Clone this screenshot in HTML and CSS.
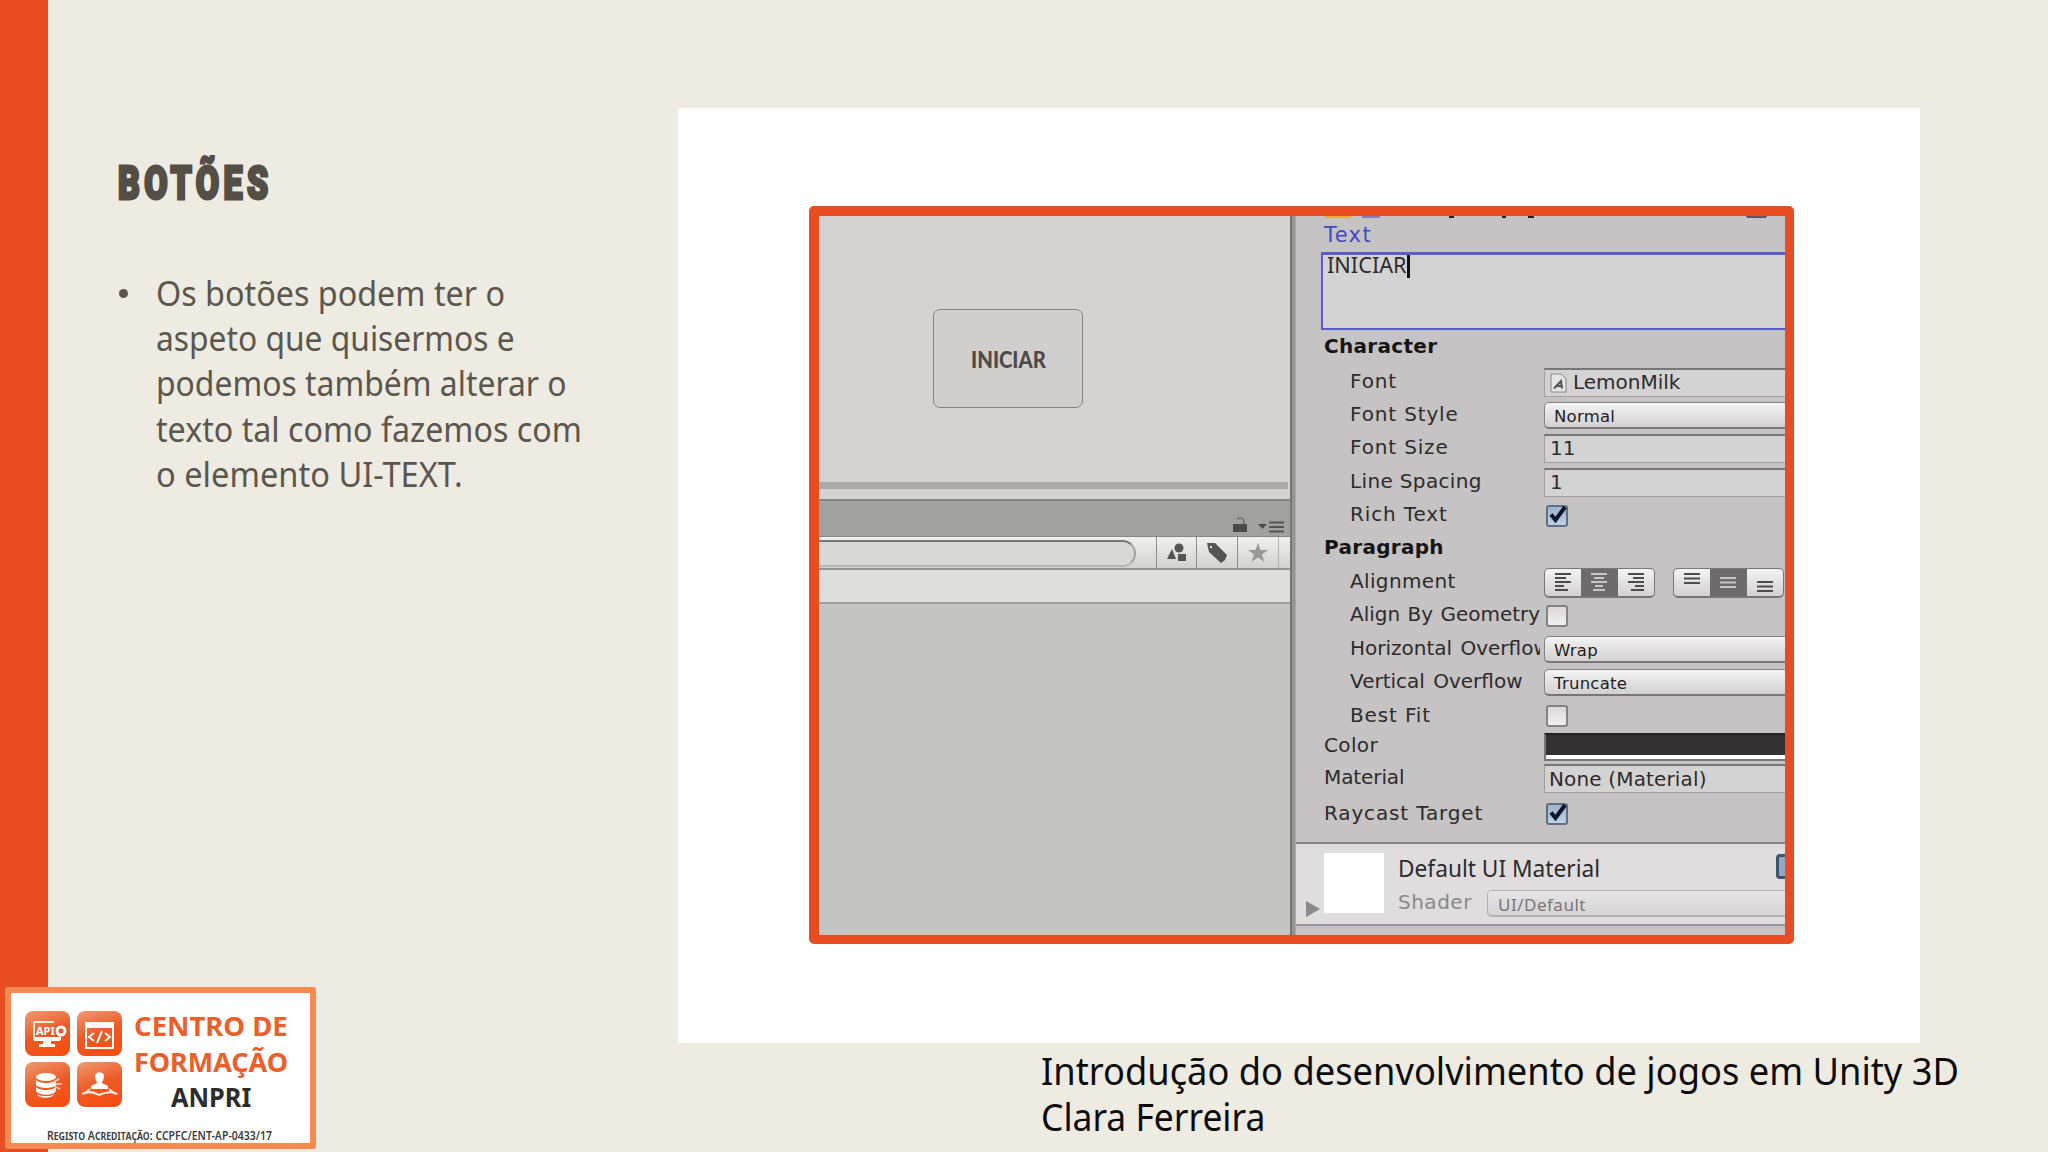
FILE: index.html
```html
<!DOCTYPE html>
<html lang="pt">
<head>
<meta charset="utf-8">
<title>Botões</title>
<link rel="stylesheet" href="styles.css">
</head>
<body>
<main class="slide">
  <div class="rail"></div>
  <section class="copy">
    <h1>BOTÕES</h1>
    <ul>
      <li><span class="l1">Os botões podem ter o</span><br><span class="l2">aspeto que quisermos e</span><br><span class="l3">podemos também alterar o</span><br><span class="l4">texto tal como fazemos com</span><br><span class="l5">o elemento UI-TEXT.</span></li>
    </ul>
  </section>
  <section class="stage">
    <div class="panel">
      <div class="shot">
        <div class="left">
          <div class="scene"><div class="game-button"><span>INICIAR</span></div></div>
          <div class="scroll"></div>
          <div class="tabbar">
            <svg width="16" height="18" viewBox="0 0 16 18"><path d="M1 8h14v8H1z" fill="#4b4b49"/><path d="M5 3.500C7 1 12 1 12 8" fill="none" stroke="#777775" stroke-width="2"/></svg>
            <svg width="28" height="14" viewBox="0 0 28 14"><path d="M1 4h9l-4.500 5z" fill="#4b4b49"/><path d="M12 2.500h15M12 7h15M12 11.500h15" stroke="#555553" stroke-width="2"/></svg>
          </div>
          <div class="toolbar">
            <div class="search"></div>
            <div class="tool first"><svg width="24" height="22" viewBox="0 0 24 22"><path d="M2 17 7 7l4 10z"/><circle cx="14" cy="6" r="4.500"/><path d="M13 12h8v7h-8z"/></svg></div>
            <div class="tool"><svg width="24" height="22" viewBox="0 0 24 22"><path fill-rule="evenodd" d="M2 1h8l12 12-2 5-4 3L4 10zM5 4v2h2V4z"/></svg></div>
            <div class="tool star"><svg width="24" height="22" viewBox="0 0 24 22"><path d="m12 1 2.500 7H22l-6 4.500 2.500 7.500L12 15.500 5.500 20 8 12.500 2 8h7.500z"/></svg></div>
            <div class="tool last"></div>
          </div>
          <div class="crumb"></div>
          <div class="assets"></div>
        </div>
        <div class="divider"></div>
        <div class="inspector">
          <div class="cutoff"><i class="c1"></i><i class="c2"></i><i class="c3"></i><i class="c4"></i><i class="c5"></i><i class="c6"></i></div>
          <div class="caption">Text</div>
          <div class="textarea"><span>INICIAR</span><i></i></div>
          <div class="row head first"><b>Character</b></div>
          <div class="row in"><label class="wide">Font</label><div class="field"><svg width="17" height="20" viewBox="0 0 17 20"><path d="M1 1h10l5 5v13H1z" fill="#e6e6e6" stroke="#888"/><path d="M4 15.500 11 8l1 7.500M7 13h5" fill="none" stroke="#555" stroke-width="2"/></svg><span class="lemon">LemonMilk</span></div></div>
          <div class="row in"><label class="wide">Font Style</label><div class="drop"><span>Normal</span></div></div>
          <div class="row in"><label class="wide">Font Size</label><div class="field num"><span>11</span></div></div>
          <div class="row in"><label class="mid">Line Spacing</label><div class="field num"><span>1</span></div></div>
          <div class="row in"><label class="wide">Rich Text</label><div class="check on"><svg viewBox="0 0 24 24"><path d="M6 11.500 10.500 17 20 4" /></svg></div></div>
          <div class="row head"><b class="para">Paragraph</b></div>
          <div class="row in"><label class="mid">Alignment</label>
            <div class="group">
              <div><svg viewBox="0 0 18 20"><path d="M1 2h16M1 6h11M1 10h16M1 14h9M1 18h13"/></svg></div>
              <div class="sel"><svg viewBox="0 0 18 20"><path d="M1 2h16M4 6h10M1 10h16M5 14h8M3 18h12"/></svg></div>
              <div><svg viewBox="0 0 18 20"><path d="M1 2h16M6 6h11M1 10h16M8 14h9M4 18h13"/></svg></div>
            </div>
            <div class="group second">
              <div><svg viewBox="0 0 18 20"><path d="M1 2h16M1 6.500h16M1 11h16"/></svg></div>
              <div class="sel"><svg viewBox="0 0 18 20"><path d="M1 6h16M1 10.500h16M1 15h16"/></svg></div>
              <div><svg viewBox="0 0 18 20"><path d="M1 10h16M1 14.500h16M1 19h16"/></svg></div>
            </div>
          </div>
          <div class="row in"><label class="open">Align By Geometry</label><div class="check"></div></div>
          <div class="row in"><label class="clipped">Horizontal Overflow</label><div class="drop"><span>Wrap</span></div></div>
          <div class="row in"><label class="clipped">Vertical Overflow</label><div class="drop"><span>Truncate</span></div></div>
          <div class="row in"><label class="wide">Best Fit</label><div class="check"></div></div>
          <div class="row color"><label class="mid">Color</label><div class="swatch"></div></div>
          <div class="row mat"><label class="tight">Material</label><div class="field none"><span>None (Material)</span></div></div>
          <div class="row ray"><label class="wide">Raycast Target</label><div class="check on"><svg viewBox="0 0 24 24"><path d="M6 11.500 10.500 17 20 4" /></svg></div></div>
          <div class="material">
            <svg class="tri" width="14" height="16" viewBox="0 0 14 16"><path d="M0 0 14 8 0 16z" fill="#8b898a"/></svg>
            <div class="preview"></div>
            <div class="info">
              <div class="name"><span>Default UI Material</span><i class="book"></i></div>
              <div class="shader"><span>Shader</span><div class="drop"><span>UI/Default</span></div></div>
            </div>
          </div>
        </div>
      </div>
    </div>
    <footer><span class="f1">Introdução do desenvolvimento de jogos em Unity 3D</span><br><span class="f2">Clara Ferreira</span></footer>
  </section>
  <aside class="logo">
    <div class="brand">
      <div class="tiles">
        <svg viewBox="0 0 45 45"><path d="M9 11h20M9 11v17h26v-4" fill="none" stroke="#ffe9df" stroke-width="2"/><path d="M9 26h26v4H9zM18 30h8v5h-8zM14 33h16v3H14z" fill="#fff"/><text x="11" y="24">API</text><circle cx="36" cy="20" r="4" fill="none" stroke="#fff" stroke-width="3"/></svg>
        <svg viewBox="0 0 45 45"><path d="M9 12h27v25H9z" fill="none" stroke="#fff" stroke-width="2"/><path d="M9 12h27v5H9z" fill="#fff"/><path d="m17 22-5 4 5 4M28 22l5 4-5 4M25 20l-5 12" fill="none" stroke="#fff" stroke-width="2"/></svg>
        <svg viewBox="0 0 45 45"><g fill="#fff"><ellipse cx="21" cy="15" rx="10" ry="4"/><path d="M11 18c3 4 17 4 20 0v5c-3 4-17 4-20 0zM11 25c3 4 17 4 20 0v4c-3 5-17 5-20 0zM12 32c4 3 14 3 17 0-1 5-16 5-17 0z"/></g><path d="m29 20 5-3M31 22h6M29 24l6 3" stroke="#ffd1bd" stroke-width="1.500"/></svg>
        <svg viewBox="0 0 45 45"><path d="M18 14c0-5 9-5 9 0 0 4-2 5-2 7l6 3v3H14v-3l6-3c0-2-2-3-2-7z" fill="#fff"/><path d="M5 32c6-3 12-2 17 1 6-3 12-4 18-1M9 30l4-3M36 30l-4-3" fill="none" stroke="#ffe9df" stroke-width="2"/></svg>
      </div>
      <div class="words"><span class="w1">CENTRO DE</span><span class="w2">FORMAÇÃO</span><span class="w3">ANPRI</span></div>
    </div>
    <div class="reg"><span>Registo Acreditação: CCPFC/ENT-AP-0433/17</span></div>
  </aside>
</main>
</body>
</html>
```
FILE: styles.css
```css
* { box-sizing: border-box; }
body { margin: 0; }
.slide {
  position: relative;
  display: flex;
  width: 2048px;
  height: 1152px;
  overflow: hidden;
  background: #eeebe3;
  font-family: "Noto Sans", "Open Sans", sans-serif;
}
.rail { width: 48px; background: #e84c22; }
span, label, b { white-space: nowrap; }
.slide span { display: inline-block; transform-origin: 0 50%; }

/* text column */
.copy { width: 630px; padding: 153px 0 0 70px; color: #5b564e; }
h1 {
  margin: 0;
  width: max-content;
  font: 900 46px/60px Roboto, sans-serif;
  letter-spacing: 6px;
  color: #544f46;
  -webkit-text-stroke: 3px #544f46;
  transform: scaleX(.735);
  transform-origin: 0 50%;
}
ul { list-style: none; margin: 58px 0 0; padding: 0; }
li { position: relative; padding-left: 38px; font-size: 34px; line-height: 45.200px; }
li::before { content: ""; position: absolute; left: 1px; top: 18px; width: 9px; height: 9px; border-radius: 50%; background: #5b564e; }
.slide .l1 { transform: scaleX(.95); }
.slide .l2 { transform: scaleX(.934); }
.slide .l3 { transform: scaleX(.937); }
.slide .l4 { transform: scaleX(.947); }
.slide .l5 { transform: scaleX(.959); }

/* picture and footer */
.stage { width: 1242px; padding-top: 108px; }
.panel { height: 935px; padding: 98px 0 0 131px; background: #fefefe; }
.shot {
  display: flex;
  width: 985px;
  height: 738px;
  border: 10px solid #e84c22;
  border-right-width: 9px;
  border-bottom-width: 9px;
  border-radius: 5px;
  background: #c4c4c2;
  overflow: hidden;
}
footer { padding: 5px 0 0 363px; font-size: 37.500px; line-height: 46px; color: #0c0b0a; white-space: nowrap; }
.slide .f1 { transform: scaleX(.967); }
.slide .f2 { transform: scaleX(.945); }

.left { width: 471px; display: flex; flex-direction: column; background: #d4d3d1; }
.scene { height: 266px; padding: 93px 0 0 114px; }
.game-button {
  display: flex; align-items: center; justify-content: center;
  width: 150px; height: 99px; padding-top: 1px;
  border: 1.500px solid #858583; border-radius: 7px; background: #d1cfcd;
  font: 900 23px/30px Lato, sans-serif; color: #4c4b49;
}
.slide .game-button span { transform: scaleX(.88); transform-origin: 50% 50%; }
.scroll { height: 17px; margin-right: 2px; border-top: 7px solid #a9a9a7; }
.tabbar { display: flex; justify-content: flex-end; align-items: flex-end; gap: 9px; height: 38px; padding: 0 5px 2px 0; background: #a1a19f; border-top: 2px solid #858583; border-bottom: 1px solid #888; }
.toolbar { display: flex; height: 33px; background: linear-gradient(#f0f0ee, #d2d2d0); border-bottom: 2px solid #949492; }
.search { width: 317px; height: 27px; margin: 3px 20px 0 0; border: 2px solid #777775; border-left: 0; border-bottom-color: #b5b5b3; border-right-color: #a0a09e; border-radius: 0 14px 14px 0; background: #d8d8d6; }
.tool { width: 41px; border-left: 1.500px solid #8d8d8b; display: flex; align-items: center; justify-content: center; fill: #555553; }
.tool.first { width: 40px; }
.tool.star { fill: #9a9a98; }
.tool.last { width: 12px; border-color: #b4b4b2; }
.crumb { height: 34px; background: #dededc; border-bottom: 2px solid #a0a09e; }
.assets { flex: 1; background: #c4c4c2; }
.divider { width: 6px; background: #959595; border-left: 2px solid #777; border-right: 1px solid #aaa; }

/* inspector */
.inspector { width: 489px; background: #c5c3c3; font: 20px/24px "DejaVu Sans", sans-serif; color: #2d2b2b; overflow: hidden; }
.cutoff { display: flex; height: 3px; padding-left: 29px; }
.cutoff i { height: 2px; }
.c1 { width: 26px; background: #e8aa3c; margin-right: 11px; }
.c2 { width: 18px; background: #8182b8; margin-right: 69px; }
.c3 { width: 5px; background: #222; margin-right: 48px; }
.c4 { width: 4px; background: #222; margin-right: 22px; }
.c5 { width: 6px; background: #222; margin-right: 212px; }
.c6 { width: 21px; background: #555865; border-radius: 0 0 8px 8px; }
.caption { height: 33px; padding-left: 28px; line-height: 32px; font-size: 21px; color: #4149c8; letter-spacing: 1.400px; }
.textarea { display: flex; width: 480px; height: 78px; margin-left: 25px; padding: 0 0 0 4px; border: 2px solid #5a5cc8; border-top-width: 3px; background: #d4d3d3; font: 21.700px/20px "Noto Sans", sans-serif; }
.textarea i { width: 3px; height: 23px; background: #111; }
.row { display: flex; align-items: center; height: 33.400px; padding-left: 28px; }
.row label { flex: none; width: 220px; overflow: hidden; margin-top: -3px; }
.row.in { padding-left: 54px; }
.row.in label { width: 190px; margin-right: 4px; }
.row label.wide { letter-spacing: .850px; }
.row label.mid { letter-spacing: .350px; }
.row label.tight { letter-spacing: -.100px; }
.row label.open { overflow: visible; word-spacing: 1px; }
.row label.clipped { word-spacing: 2px; }
.row b { color: #161515; margin-top: -4px; font-size: 20px; letter-spacing: .300px; }
.row.first { height: 35.500px; }
.field { display: flex; align-items: center; flex: none; width: 250px; height: 29px; border: 1.500px solid #a2a0a0; border-top: 2px solid #777; background: #d4d3d3; padding-left: 5px; }
.field span { margin-top: -1px; }
.none { padding-left: 4px; letter-spacing: .150px; }
.field svg { margin-right: 6px; }
.num { padding-left: 5px; }
.num span { margin-top: -2px; }
.drop { display: flex; align-items: center; flex: none; width: 260px; height: 27px; border: 1.500px solid #858383; border-bottom: 2px solid #777; border-radius: 5px; background: linear-gradient(#f4f4f4, #d2d0d0); padding: 4px 0 0 9px; font-size: 16.500px; line-height: 20px; letter-spacing: .250px; color: #1e1d1d; }
.check { width: 22px; height: 22px; margin-left: 2px; border: 2px solid #858383; border-radius: 3px; background: linear-gradient(#dcdada, #f0eeee); }
.check.on { background: linear-gradient(#9db3cd, #bdd2e6); border-color: #626d80; }
.check svg { display: block; width: 24px; height: 24px; margin: -4px -3px; overflow: visible; fill: none; stroke: #0e1528; stroke-width: 4; }
.group { display: flex; flex: none; width: 111px; height: 30px; border: 1.500px solid #777; border-bottom-width: 2px; border-radius: 5px; overflow: hidden; background: linear-gradient(#f4f4f4, #d2d0d0); }
.group.second { margin-left: 18px; }
.group div { flex: 1; display: flex; align-items: center; justify-content: center; }
.group svg { width: 18px; height: 20px; stroke: #4d4b4b; stroke-width: 2.200; }
.group .sel { background: #6d6b6b; }
.group .sel svg { stroke: #c8c6c6; }
.row.color { height: 27.500px; }
.swatch { flex: none; width: 250px; height: 28px; border: 2px solid #777; border-top-color: #222; background: linear-gradient(#333132 0 20px, #fff 20px); }
.row.mat { height: 37px; }
.row.ray { height: 34px; }
.material { display: flex; height: 84px; margin-top: 11px; border-top: 2px solid #858383; border-bottom: 2px solid #98969c; background: #dfddde; }
.tri { flex: none; margin: 57px 4px 0 10px; }
.preview { flex: none; width: 60px; height: 60px; margin: 9px 14px 0 0; background: #fff; }
.info { flex: 1; min-width: 0; }
.name { display: flex; justify-content: space-between; height: 38px; padding-top: 10px; font: 22.700px/30px "Noto Sans", sans-serif; }
.book { width: 9px; height: 25px; border: 3px solid #3d566e; border-right: 0; border-radius: 4px 0 0 4px; background: #91a9bd; }
.shader { display: flex; align-items: center; height: 42px; gap: 16px; color: #8b898a; letter-spacing: .500px; }
.shader > span { margin-top: -3px; width: 73px; }
.shader .drop { width: 310px; background: linear-gradient(#e6e4e5, #d6d4d5); border-color: #b2b0b1; color: #777576; padding-left: 10px; font: 17px/20px "Noto Sans", sans-serif; letter-spacing: .500px; }

/* logo badge placed over the slide corner */
.logo { position: absolute; left: 5px; top: 987px; width: 311px; height: 162px; border: 6.500px solid #f98b51; border-radius: 3px; background: #fff; }
.brand { display: flex; align-items: flex-start; height: 110px; padding: 18px 0 0 14px; gap: 12px; }
.tiles { display: grid; grid-template-columns: 45px 45px; grid-template-rows: 45px 45px; gap: 6px 7px; }
.tiles svg { width: 45px; height: 45px; border-radius: 8px; background: linear-gradient(160deg, #ee9b74, #ec5a25 50%, #fb4a0c); }
.tiles text { font: bold 11px "Noto Sans", sans-serif; fill: #fff; }
.words { display: flex; flex-direction: column; width: 154px; margin-top: -3px; font: 700 27.500px/35.500px "Noto Sans", sans-serif; color: #e9602c; }
.slide .w2 { transform: scaleX(.98); }
.slide .w3 { color: #2d2b2c; margin-left: 37px; transform: scaleX(.92); }
.reg { padding: 22px 0 0 36px; font: 600 13px/20px "Noto Sans", sans-serif; font-variant: small-caps; color: #3f3d3d; }
.slide .reg span { transform: scaleX(.81); }
```
